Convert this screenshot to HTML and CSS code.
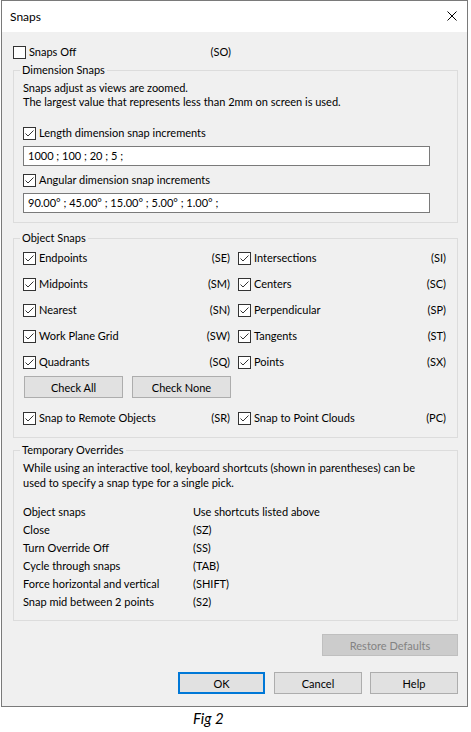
FILE: index.html
```html
<!DOCTYPE html>
<html lang="en">
<head>
    <meta charset="UTF-8">
    <meta name="viewport" content="width=device-width, initial-scale=1.0">
    <title>Snaps</title>
    <link rel="stylesheet" href="styles.css">
</head>
<body>
    <div class="window">
        <div class="titlebar">
            <span class="title">Snaps</span>
            <svg class="close" width="10" height="10" viewBox="0 0 10 10">
                <path d="M0.5 0.5 L9.5 9.5 M9.5 0.5 L0.5 9.5" stroke="#000" stroke-width="1" fill="none"/>
            </svg>
        </div>
        <div class="dialog">
            <div class="snap-row top-row">
                <span class="check"></span>
                <span class="label">Snaps Off</span>
                <span class="key">(SO)</span>
            </div>

            <fieldset class="group dim-group">
                <legend>Dimension Snaps</legend>
                <p class="info">Snaps adjust as views are zoomed.<br>The largest value that represents less than 2mm on screen is used.</p>
                <div class="snap-row first-check">
                    <span class="check checked"></span>
                    <span class="label">Length dimension snap increments</span>
                </div>
                <div class="field">1000 ; 100 ; 20 ; 5 ;</div>
                <div class="snap-row second-check">
                    <span class="check checked"></span>
                    <span class="label">Angular dimension snap increments</span>
                </div>
                <div class="field">90.00° ; 45.00° ; 15.00° ; 5.00° ; 1.00° ;</div>
            </fieldset>

            <fieldset class="group obj-group">
                <legend>Object Snaps</legend>
                <div class="snap-grid">
                    <div class="snap-row"><span class="check checked"></span><span class="label">Endpoints</span><span class="key">(SE)</span></div>
                    <div class="snap-row"><span class="check checked"></span><span class="label">Intersections</span><span class="key">(SI)</span></div>
                    <div class="snap-row"><span class="check checked"></span><span class="label">Midpoints</span><span class="key">(SM)</span></div>
                    <div class="snap-row"><span class="check checked"></span><span class="label">Centers</span><span class="key">(SC)</span></div>
                    <div class="snap-row"><span class="check checked"></span><span class="label">Nearest</span><span class="key">(SN)</span></div>
                    <div class="snap-row"><span class="check checked"></span><span class="label">Perpendicular</span><span class="key">(SP)</span></div>
                    <div class="snap-row"><span class="check checked"></span><span class="label">Work Plane Grid</span><span class="key">(SW)</span></div>
                    <div class="snap-row"><span class="check checked"></span><span class="label">Tangents</span><span class="key">(ST)</span></div>
                    <div class="snap-row"><span class="check checked"></span><span class="label">Quadrants</span><span class="key">(SQ)</span></div>
                    <div class="snap-row"><span class="check checked"></span><span class="label">Points</span><span class="key">(SX)</span></div>
                </div>
                <div class="check-buttons">
                    <button class="btn">Check All</button>
                    <button class="btn">Check None</button>
                </div>
                <div class="snap-grid remote-row">
                    <div class="snap-row"><span class="check checked"></span><span class="label">Snap to Remote Objects</span><span class="key">(SR)</span></div>
                    <div class="snap-row"><span class="check checked"></span><span class="label">Snap to Point Clouds</span><span class="key">(PC)</span></div>
                </div>
            </fieldset>

            <fieldset class="group temp-group">
                <legend>Temporary Overrides</legend>
                <p class="info temp-info">While using an interactive tool, keyboard shortcuts (shown in parentheses) can be used to specify a snap type for a single pick.</p>
                <div class="override-list">
                    <span>Object snaps</span><span>Use shortcuts listed above</span>
                    <span>Close</span><span>(SZ)</span>
                    <span>Turn Override Off</span><span>(SS)</span>
                    <span>Cycle through snaps</span><span>(TAB)</span>
                    <span>Force horizontal and vertical</span><span>(SHIFT)</span>
                    <span>Snap mid between 2 points</span><span>(S2)</span>
                </div>
            </fieldset>

            <div class="restore-bar">
                <button class="btn restore" disabled>Restore Defaults</button>
            </div>
            <div class="action-bar">
                <button class="btn default">OK</button>
                <button class="btn">Cancel</button>
                <button class="btn">Help</button>
            </div>
        </div>
    </div>
    <p class="caption">Fig 2</p>
</body>
</html>
```

FILE: styles.css
```css
* {
    box-sizing: border-box;
}
body {
    margin: 0;
    background-color: #fff;
    font-family: Lato, sans-serif;
    font-size: 11px;
    color: #000;
}
.window {
    width: 467px;
    height: 707px;
    margin-left: 1px;
    border: 1px solid #7a7a7a;
    background-color: #f0f0f0;
    display: flex;
    flex-direction: column;
}
.titlebar {
    height: 31px;
    background-color: #fff;
    display: flex;
    align-items: center;
    justify-content: space-between;
    padding: 0 10px 1px 8px;
}
.title {
    font-size: 12px;
}
.dialog {
    flex: 1;
    padding: 12px 9px 0 11px;
}
.snap-row {
    display: flex;
    align-items: center;
    height: 16px;
    line-height: 16px;
}
.top-row {
    width: 218px;
}
.check {
    width: 13px;
    height: 13px;
    border: 1px solid #333;
    background: #fff;
    margin-right: 3px;
    flex: none;
}
.check.checked {
    background: #fff url("data:image/svg+xml;utf8,<svg xmlns='http://www.w3.org/2000/svg' width='11' height='11'><path d='M1.5 5.5 L4 8 L9.5 2.5' stroke='%23333' stroke-width='1' fill='none'/></svg>") no-repeat center;
}
.label {
    flex: 1;
    white-space: nowrap;
}
.key {
    flex: none;
}
.group {
    margin: 3px 0 0;
    padding: 0 9px 9px 9px;
    border: 1px solid #dcdcdc;
    min-width: 0;
}
.group legend {
    margin-left: -3px;
    padding: 0 2px;
    line-height: 14px;
}
.info {
    margin: 4px 0 0;
    line-height: 14px;
}
.first-check {
    margin-top: 16px;
}
.second-check {
    margin-top: 6px;
}
.field {
    margin-top: 5px;
    width: 407px;
    height: 20px;
    line-height: 18px;
    padding: 0 4px;
    background: #fff;
    border: 1px solid #7a7a7a;
}
.obj-group {
    margin-top: 8px;
    padding-bottom: 11px;
}
.snap-grid {
    display: grid;
    grid-template-columns: 215px 208px;
    row-gap: 10px;
    margin-top: 5px;
}
.snap-grid .snap-row .key {
    margin-right: 8px;
}
.snap-grid .snap-row:nth-child(even) .key {
    margin-right: 0;
}
.check-buttons {
    display: flex;
    gap: 9px;
    margin: 6px 0 0 1px;
}
.remote-row {
    margin-top: 12px;
}
.btn {
    height: 22px;
    padding: 0;
    font-family: Lato, sans-serif;
    font-size: 11px;
    color: #000;
    background-color: #e1e1e1;
    border: 1px solid #adadad;
}
.check-buttons .btn {
    width: 99px;
}
.temp-group {
    margin-top: 5px;
}
.temp-info {
    margin-top: 3px;
    line-height: 15px;
    width: 400px;
}
.override-list {
    display: grid;
    grid-template-columns: 170px 1fr;
    grid-auto-rows: 18px;
    line-height: 18px;
    margin-top: 13px;
}
.restore-bar {
    display: flex;
    justify-content: flex-end;
    margin-top: 13px;
}
.restore {
    width: 136px;
    background-color: #cccccc;
    border-color: #bfbfbf;
    color: #838383;
}
.action-bar {
    display: flex;
    justify-content: flex-end;
    gap: 8px;
    margin-top: 16px;
}
.action-bar .btn {
    width: 88px;
}
.action-bar .default {
    width: 87px;
    border: 2px solid #0078d7;
    margin-right: 1px;
}
.caption {
    margin: 0;
    padding-left: 193px;
    line-height: 22px;
    font-size: 15px;
    font-style: italic;
}
```
